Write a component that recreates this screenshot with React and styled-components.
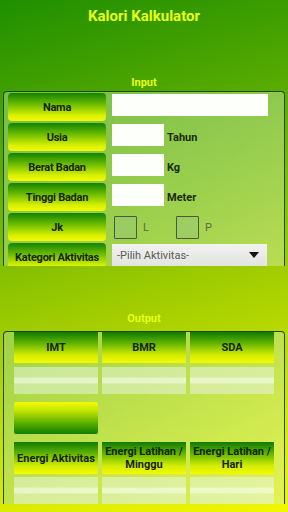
import styled, { createGlobalStyle } from "styled-components";

const Global = createGlobalStyle`
  html, body {
    margin: 0;
    padding: 0;
  }
  body {
    font-family: Roboto, "Liberation Sans", sans-serif;
  }
`;

const Page = styled.div`
  width: 288px;
  height: 512px;
  overflow: hidden;
  display: flex;
  flex-direction: column;
  background: linear-gradient(165deg, #1f8f00 0%, #5fae00 30%, #a6cf00 60%, #d8ea00 85%, #f2f600 100%);
`;

const Title = styled.h1`
  margin: 0;
  padding-top: 7px;
  height: 24px;
  text-align: center;
  font-size: 15px;
  font-weight: 700;
  line-height: 18px;
  color: #e6ff1a;
`;

const SectionLabel = styled.div`
  text-align: center;
  font-size: 11px;
  font-weight: 700;
  line-height: 14px;
  color: #e8ff1a;
  margin-top: ${(p) => p.$top}px;
  height: 14px;
`;

const Panel = styled.div`
  margin: ${(p) => p.$top}px 3px 0 3px;
  height: ${(p) => p.$height}px;
  overflow: hidden;
  border: 1px solid #1d4a06;
  border-bottom: none;
  border-radius: 4px 4px 0 0;
  background: linear-gradient(120deg, rgba(160, 215, 130, 0.55), rgba(215, 240, 180, 0.45));
  box-sizing: border-box;
`;

const InputList = styled.div`
  display: flex;
  flex-direction: column;
  gap: 2px;
  padding: 1px 4px 0 4px;
`;

const Row = styled.div`
  display: flex;
  align-items: center;
  gap: 6px;
  height: 28px;
`;

const LabelButton = styled.div`
  flex: 0 0 98px;
  height: 28px;
  display: flex;
  align-items: center;
  justify-content: center;
  border-radius: 4px;
  background: linear-gradient(180deg, #138300 0%, #6cbc00 40%, #d8f000 80%, #f4fa00 100%);
  font-size: 11px;
  font-weight: 700;
  color: #142400;
  white-space: nowrap;
  letter-spacing: -0.25px;
`;

const TextBox = styled.div`
  width: ${(p) => p.$width}px;
  height: 22px;
  background: #fdfffb;
  align-self: flex-start;
  margin-top: 1px;
`;

const Unit = styled.span`
  font-size: 11px;
  font-weight: 700;
  color: #1a2a08;
  margin-left: -3px;
`;

const Check = styled.label`
  display: flex;
  align-items: center;
  gap: 6px;
  font-size: 11px;
  color: #5a6a50;
  margin-left: 2px;
  width: 54px;
`;

const Box = styled.span`
  width: 21px;
  height: 21px;
  border: 1px solid #4a5a40;
  border-radius: 1px;
  background: rgba(150, 200, 120, 0.5);
`;

const Select = styled.div`
  width: 155px;
  height: 22px;
  align-self: flex-start;
  margin-top: 1px;
  box-sizing: border-box;
  padding: 0 8px 0 5px;
  display: flex;
  align-items: center;
  justify-content: space-between;
  background: linear-gradient(180deg, #f2f2f0, #e2e4de);
  font-size: 11px;
  color: #5a5a5a;
`;

const Arrow = styled.span`
  width: 0;
  height: 0;
  border-left: 5px solid transparent;
  border-right: 5px solid transparent;
  border-top: 6px solid #111;
`;

const OutputGrid = styled.div`
  display: grid;
  grid-template-columns: repeat(3, 1fr);
  column-gap: 4px;
  padding: 0 10px;
`;

const HeadCell = styled.div`
  height: ${(p) => p.$h}px;
  margin-top: ${(p) => p.$mt}px;
  display: flex;
  align-items: center;
  justify-content: center;
  text-align: center;
  background: linear-gradient(180deg, #0f7a00 0%, #5fb200 35%, #d4ee00 75%, #f4fa00 100%);
  font-size: 11px;
  font-weight: 700;
  line-height: 13px;
  color: #142400;
`;

const ValueCell = styled.div`
  height: 27px;
  margin-top: ${(p) => p.$mt}px;
  background: linear-gradient(
    180deg,
    rgba(230, 245, 220, 0.55) 0%,
    rgba(230, 245, 220, 0.55) 38%,
    rgba(245, 252, 240, 0.75) 40%,
    rgba(245, 252, 240, 0.75) 60%,
    rgba(230, 245, 220, 0.55) 62%,
    rgba(230, 245, 220, 0.55) 100%
  );
`;

const HitungButton = styled.div`
  grid-column: 1;
  height: 32px;
  margin-top: 8px;
  border-radius: 2px;
  background: linear-gradient(180deg, #f4fa00 0%, #c8e800 25%, #5cb000 65%, #0e7e00 100%);
`;

const Filler = styled.div`
  grid-column: 2 / 4;
`;

const inputRows = [
  { label: "Nama", width: 156 },
  { label: "Usia", width: 52, unit: "Tahun" },
  { label: "Berat Badan", width: 52, unit: "Kg" },
  { label: "Tinggi Badan", width: 52, unit: "Meter" },
];

export default function App() {
  return (
    <Page>
      <Global />
      <Title>Kalori Kalkulator</Title>
      <SectionLabel $top={45}>Input</SectionLabel>
      <Panel $top={1} $height={175}>
        <InputList>
          {inputRows.map((r) => (
            <Row key={r.label}>
              <LabelButton>{r.label}</LabelButton>
              <TextBox $width={r.width} />
              {r.unit && <Unit>{r.unit}</Unit>}
            </Row>
          ))}
          <Row>
            <LabelButton>Jk</LabelButton>
            <Check>
              <Box />L
            </Check>
            <Check>
              <Box />P
            </Check>
          </Row>
          <Row>
            <LabelButton>Kategori Aktivitas</LabelButton>
            <Select>
              -Pilih Aktivitas-
              <Arrow />
            </Select>
          </Row>
        </InputList>
      </Panel>
      <SectionLabel $top={46}>Output</SectionLabel>
      <Panel $top={5} $height={173}>
        <OutputGrid>
          <HeadCell $h={31} $mt={0}>IMT</HeadCell>
          <HeadCell $h={31} $mt={0}>BMR</HeadCell>
          <HeadCell $h={31} $mt={0}>SDA</HeadCell>
          <ValueCell $mt={4} />
          <ValueCell $mt={4} />
          <ValueCell $mt={4} />
          <HitungButton />
          <Filler />
          <HeadCell $h={32} $mt={8}>Energi Aktivitas</HeadCell>
          <HeadCell $h={32} $mt={8}>Energi Latihan / Minggu</HeadCell>
          <HeadCell $h={32} $mt={8}>Energi Latihan / Hari</HeadCell>
          <ValueCell $mt={3} />
          <ValueCell $mt={3} />
          <ValueCell $mt={3} />
        </OutputGrid>
      </Panel>
    </Page>
  );
}
